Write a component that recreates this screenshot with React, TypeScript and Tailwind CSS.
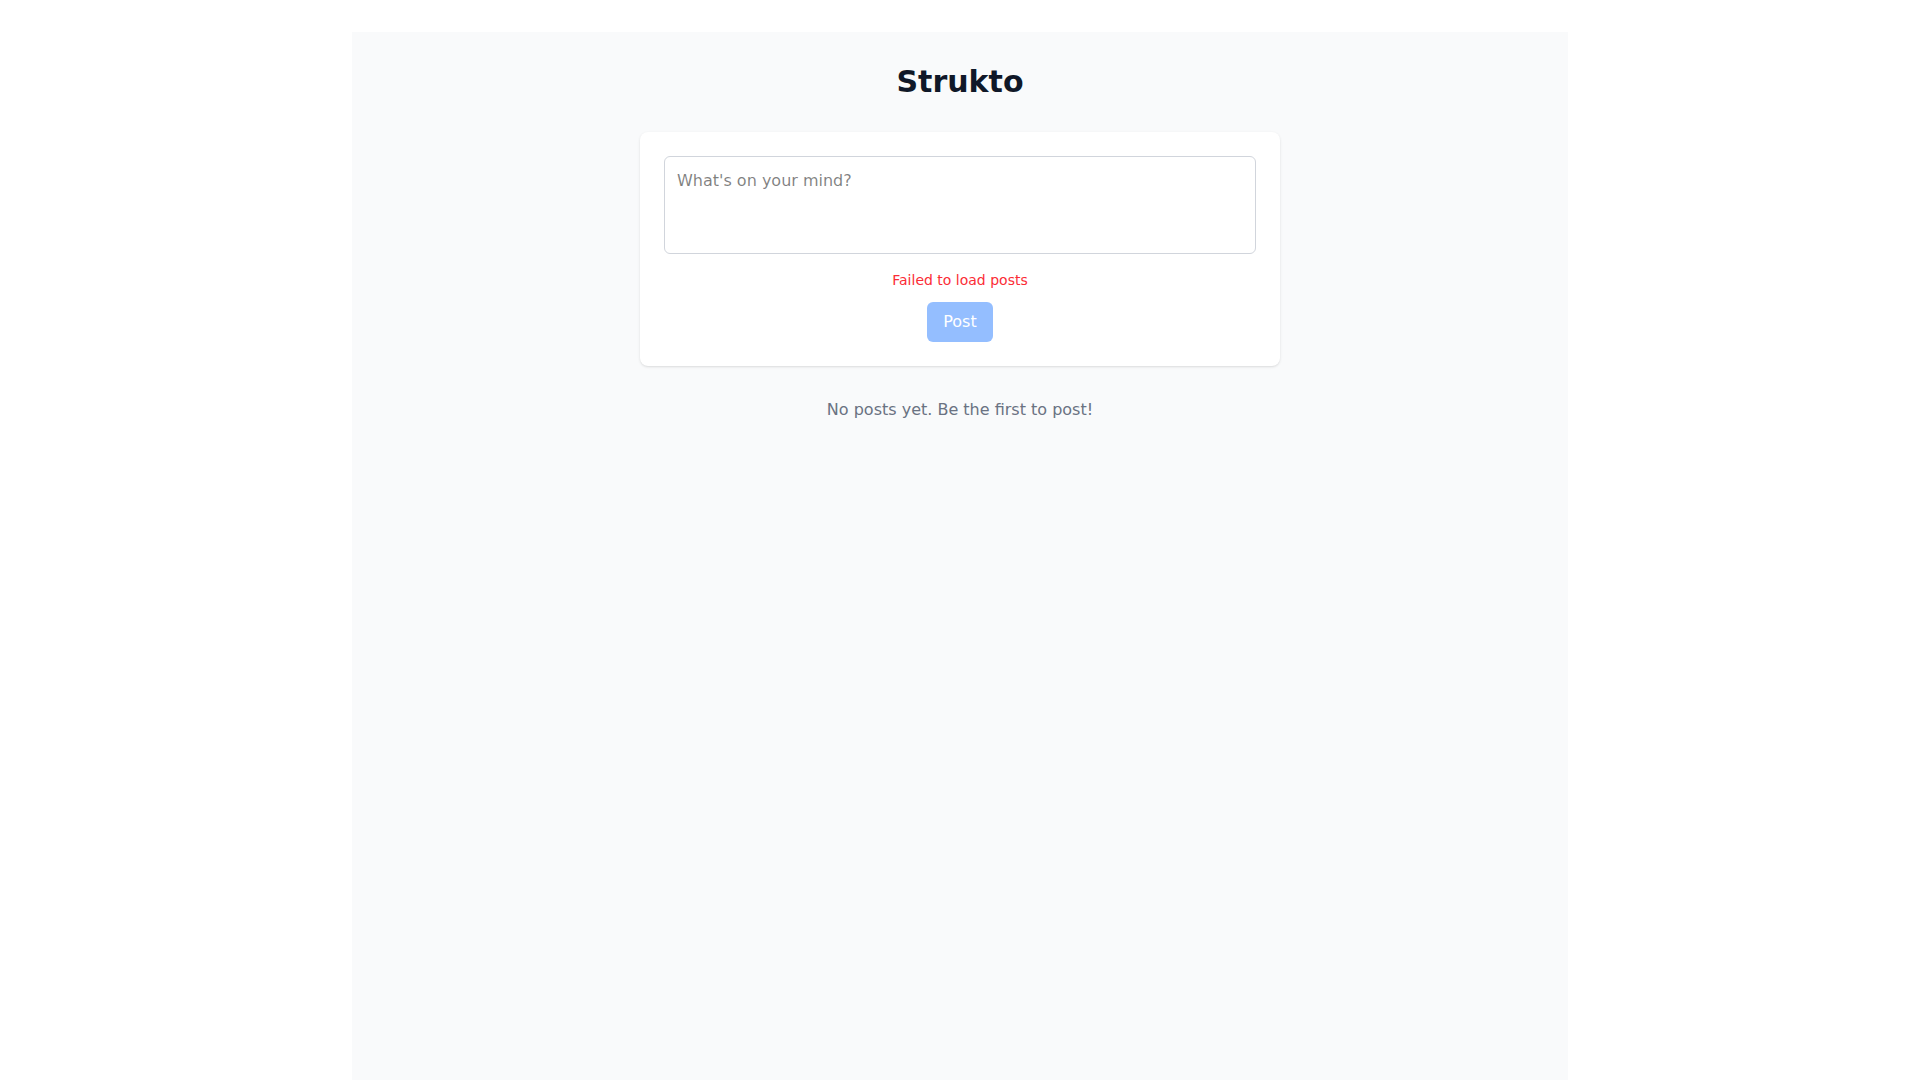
import React, { useState } from 'react';

export default function App() {
  const [content, setContent] = useState('');
  const error = 'Failed to load posts';
  const posts: { id: string; body: string }[] = [];

  return (
    <div className="min-h-screen bg-white font-['DejaVu_Sans',sans-serif]">
      <div className="max-w-7xl mx-auto p-8">
        <div className="min-h-screen bg-gray-50 p-8">
          <h1 className="text-3xl font-bold text-gray-900 text-center mb-8">Strukto</h1>

          <div className="max-w-[640px] mx-auto bg-white rounded-lg shadow-sm p-6">
            <textarea
              rows={3}
              value={content}
              onChange={(e) => setContent(e.target.value)}
              placeholder="What's on your mind?"
              className="block w-full p-3 text-base border border-gray-300 rounded-md resize-none outline-none"
            />
            {error && <p className="mt-4 text-sm text-red-500 text-center">{error}</p>}
            <div className="flex justify-center mt-3">
              <button
                disabled={!content.trim()}
                className="px-4 py-2 text-base text-white bg-blue-500 rounded-md disabled:opacity-50"
              >
                Post
              </button>
            </div>
          </div>

          <div className="max-w-[640px] mx-auto mt-8">
            {posts.length === 0 ? (
              <p className="text-center text-gray-500">No posts yet. Be the first to post!</p>
            ) : (
              posts.map((p) => <div key={p.id}>{p.body}</div>)
            )}
          </div>
        </div>
      </div>
    </div>
  );
}
